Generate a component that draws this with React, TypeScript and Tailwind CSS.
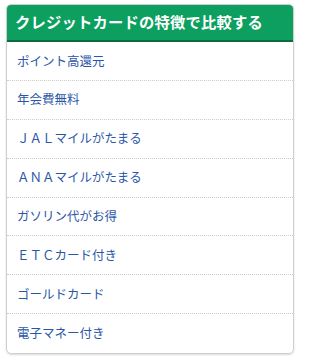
const items = [
  "ポイント高還元",
  "年会費無料",
  "ＪＡＬマイルがたまる",
  "ＡＮＡマイルがたまる",
  "ガソリン代がお得",
  "ＥＴＣカード付き",
  "ゴールドカード",
  "電子マネー付き",
];

export default function App() {
  return (
    <div
      className="w-[300px] h-[360px] bg-white pt-[4px] px-[6px]"
      style={{ fontFamily: '"Noto Sans CJK JP", "Noto Sans", sans-serif' }}
    >
      <div className="rounded-[5px] border border-[#cfcfcf] shadow-[0_1px_2px_rgba(0,0,0,0.15)] overflow-hidden">
        <div className="h-[38px] bg-[#0c9f5f] border-b-[2px] border-[#0a6b41] flex items-center pl-[9px] -mx-px -mt-px">
          <h2 className="text-white font-bold text-[15.3px] leading-none tracking-[0.2px]">
            クレジットカードの特徴で比較する
          </h2>
        </div>
        <ul>
          {items.map((item, i) => (
            <li
              key={item}
              className={
                "h-[38.9px] flex items-center pl-[10px] text-[12.5px] text-[#2a56a8] " +
                (i < items.length - 1 ? "border-b border-dotted border-[#cccccc]" : "")
              }
            >
              {item}
            </li>
          ))}
        </ul>
      </div>
    </div>
  );
}
